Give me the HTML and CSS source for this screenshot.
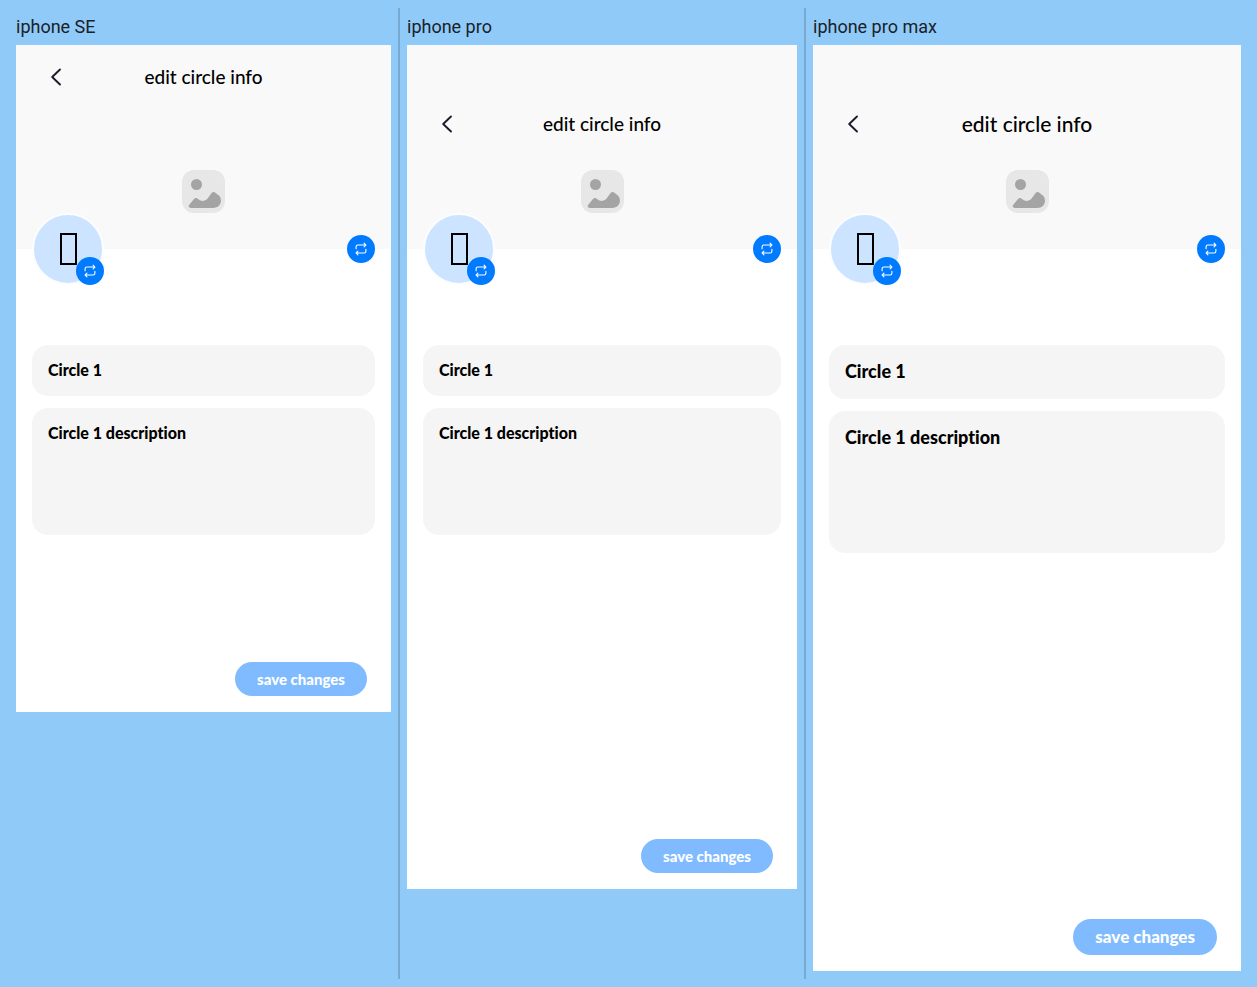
FILE: index.html
```
<!DOCTYPE html>
<html lang="en">
<head>
<meta charset="utf-8">
<meta name="viewport" content="width=device-width, initial-scale=1">
<title>edit circle info</title>
<link rel="stylesheet" href="styles.css">
</head>
<body>
<svg class="sprite" aria-hidden="true">
  <symbol id="back" viewBox="0 0 24 24"><path d="M16 4.500 8.200 12l7.800 7.500" fill="none" stroke="#1d1b2e" stroke-width="1.900" stroke-linecap="round" stroke-linejoin="round"/></symbol>
  <symbol id="swap" viewBox="0 0 24 24"><path d="M3.600 11.500V8.200c0-1.700 1.300-3 3-3h13.800M17.300 2l3.100 3.200-3.100 3.100M20.400 12.500v3.300c0 1.700-1.300 3-3 3H3.600M6.700 22l-3.100-3.200 3.100-3.100" fill="none" stroke="#fff" stroke-width="1.900" stroke-linecap="round" stroke-linejoin="round"/></symbol>
  <symbol id="picture" viewBox="0 0 43 43"><rect width="43" height="43" rx="12" fill="#e7e7e7"/><circle cx="14.500" cy="14.500" r="5.500" fill="#a4a4a4"/><path d="M7.500 34.500 11.800 29.200c1.100-1.400 2.500-1.500 4-.5 3.600 3 7.600 3 10.200-.6l3.200-4.500c1.200-1.700 2.900-2 4.500-.7l3.500 2.900c3.800 4.600 1.400 12.200-6 12.200H10c-3 0-4.200-1.600-2.500-3.500Z" fill="#a4a4a4"/></symbol>
</svg>
<main class="board">
  <section class="device">
    <h2 class="device-name">iphone SE</h2>
    <form class="phone phone-se">
      <header class="banner">
        <div class="topbar"><button type="button" class="back" aria-label="Back"><svg><use href="#back"/></svg></button><h1 class="title">edit circle info</h1></div>
        <svg class="picture"><use href="#picture"/></svg>
      </header>
      <div class="identity">
        <div class="avatar"><span class="glyph"></span><button type="button" class="swap swap-avatar" aria-label="Change icon"><svg><use href="#swap"/></svg></button></div>
        <button type="button" class="swap" aria-label="Change cover"><svg><use href="#swap"/></svg></button>
      </div>
      <div class="fields">
        <input class="field" type="text" aria-label="Circle name" value="Circle 1">
        <textarea class="field" rows="5" aria-label="Circle description">Circle 1 description</textarea>
      </div>
      <button type="submit" class="save">save changes</button>
    </form>
  </section>
  <div class="divider"></div>
  <section class="device device-pro">
    <h2 class="device-name">iphone pro</h2>
    <form class="phone phone-pro">
      <header class="banner">
        <div class="topbar"><button type="button" class="back" aria-label="Back"><svg><use href="#back"/></svg></button><h1 class="title">edit circle info</h1></div>
        <svg class="picture"><use href="#picture"/></svg>
      </header>
      <div class="identity">
        <div class="avatar"><span class="glyph"></span><button type="button" class="swap swap-avatar" aria-label="Change icon"><svg><use href="#swap"/></svg></button></div>
        <button type="button" class="swap" aria-label="Change cover"><svg><use href="#swap"/></svg></button>
      </div>
      <div class="fields">
        <input class="field" type="text" aria-label="Circle name" value="Circle 1">
        <textarea class="field" rows="5" aria-label="Circle description">Circle 1 description</textarea>
      </div>
      <button type="submit" class="save">save changes</button>
    </form>
  </section>
  <div class="divider"></div>
  <section class="device device-max">
    <h2 class="device-name">iphone pro max</h2>
    <form class="phone phone-max">
      <header class="banner">
        <div class="topbar"><button type="button" class="back" aria-label="Back"><svg><use href="#back"/></svg></button><h1 class="title">edit circle info</h1></div>
        <svg class="picture"><use href="#picture"/></svg>
      </header>
      <div class="identity">
        <div class="avatar"><span class="glyph"></span><button type="button" class="swap swap-avatar" aria-label="Change icon"><svg><use href="#swap"/></svg></button></div>
        <button type="button" class="swap" aria-label="Change cover"><svg><use href="#swap"/></svg></button>
      </div>
      <div class="fields">
        <input class="field" type="text" aria-label="Circle name" value="Circle 1">
        <textarea class="field" rows="5" aria-label="Circle description">Circle 1 description</textarea>
      </div>
      <button type="submit" class="save">save changes</button>
    </form>
  </section>
</main>
</body>
</html>
```
FILE: styles.css
```
* { box-sizing: border-box; }

body {
  margin: 0;
  background: #90caf9;
  font-family: Lato, sans-serif;
  font-variant-ligatures: none;
  color: #000;
}

button { border: 0; padding: 0; font: inherit; cursor: pointer; }

.sprite { position: absolute; width: 0; height: 0; }

.board {
  display: flex;
  gap: 7px;
  min-height: 100vh;
  padding: 8px 16px;
}

.divider { flex: none; width: 2px; background: #78a9d1; }

.device { flex: 375 1 0; min-width: 0; }
.device-pro { flex-grow: 390; }
.device-max { flex-grow: 428; }

.device-name {
  margin: 0;
  padding: 8px 0;
  font: 400 18px/21px Roboto, sans-serif;
  color: #1a2127;
}

.phone {
  --text: 16px;
  --line: 19px;
  --title: 19px;
  --save: 15px;
  display: flex;
  flex-direction: column;
  background: #fff;
}
.phone-se { aspect-ratio: 375 / 667; }
.phone-pro { aspect-ratio: 390 / 844; }
.phone-max {
  --text: 18px;
  --line: 22px;
  --title: 21px;
  --save: 17px;
  aspect-ratio: 428 / 926;
}

.banner {
  display: flex;
  flex-direction: column;
  align-items: center;
  justify-content: space-between;
  min-height: 204px;
  padding-bottom: 36px;
  background: #f9f9f9;
}
.phone-pro .banner,
.phone-max .banner { padding-top: 47px; }

.topbar {
  display: grid;
  grid-template-columns: 24px 1fr 24px;
  align-items: center;
  width: 100%;
  height: 64px;
  padding: 0 28px;
}
.back { display: flex; background: none; }
.back svg { width: 24px; height: 24px; }
.title {
  margin: 0;
  text-align: center;
  font-size: var(--title);
  font-weight: 500;
  line-height: 24px;
}
.picture { width: 43px; height: 43px; }

.identity {
  display: flex;
  align-items: center;
  justify-content: space-between;
  margin-top: -36px;
  padding: 0 16px;
}
.avatar {
  position: relative;
  display: grid;
  place-items: center;
  width: 72px;
  height: 72px;
  border: 2px solid #fcfdff;
  border-radius: 50%;
  background: #cce4ff;
}
.glyph { width: 17px; height: 32px; border: 2px solid #000; }
.swap {
  display: grid;
  place-items: center;
  width: 28px;
  height: 28px;
  border-radius: 50%;
  background: #007bff;
}
.swap svg { width: 14px; height: 14px; }
.swap-avatar { position: absolute; right: -2px; bottom: -2px; }

.fields {
  display: flex;
  flex-direction: column;
  gap: 12px;
  padding: 60px 16px 0;
}
.field {
  display: block;
  width: 100%;
  margin: 0;
  padding: 15px 16px 17px;
  border: 0;
  border-radius: 16px;
  background: #f5f5f5;
  color: #000;
  font: 900 var(--text)/var(--line) Lato, sans-serif;
  font-variant-ligatures: none;
  resize: none;
}
input.field { height: calc(var(--line) + 32px); }

.save {
  align-self: flex-end;
  margin: auto 24px 16px;
  padding: 8px 22px;
  border-radius: 18px;
  background: #80bbff;
  color: #fff;
  font-size: var(--save);
  font-weight: 900;
  line-height: 18px;
}
.phone-max .save { line-height: 20px; }
```
